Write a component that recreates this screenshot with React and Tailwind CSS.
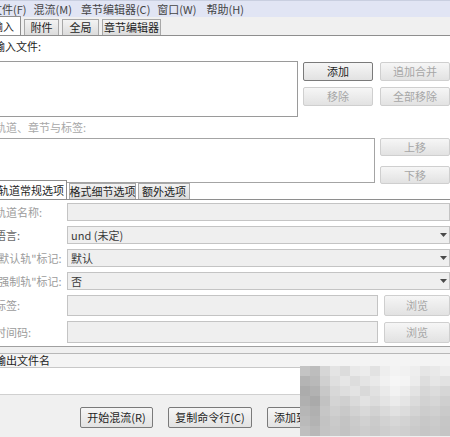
// MKVToolNix-style mux window (Chinese UI), clipped at 450x437

const font = { fontFamily: '"Noto Sans CJK SC", "Liberation Sans", sans-serif' };

// mosaic watermark colours, row by row (15 x 7 cells of 10px)
const MOSAIC = [
  ["#c4c4c4", "#bdbdbd", "#d6d6d6", "#e4e4e4", "#dcdcdc", "#e9e9e9", "#ececec", "#e2e2e2", "#eeeeee", "#f3f3f3", "#f1f1f1", "#eeeeee", "#e6e6e6", "#e9e9e9", "#eeeeee"],
  ["#b4b4b4", "#b9b9b9", "#d0d0d0", "#dfdfdf", "#e6e6e6", "#dddddd", "#e4e4e4", "#e9e9e9", "#f1f1f1", "#f6f6f6", "#f4f4f4", "#ececec", "#dedede", "#e6e6e6", "#e2e2e2"],
  ["#acacac", "#b2b2b2", "#c8c8c8", "#d8d8d8", "#dedede", "#e3e3e3", "#d9d9d9", "#e1e1e1", "#eaeaea", "#f2f2f2", "#ededed", "#e3e3e3", "#d7d7d7", "#dcdcdc", "#d6d6d6"],
  ["#b0b0b0", "#aaaaaa", "#c2c2c2", "#d4d4d4", "#d0d0d0", "#dadada", "#e2e2e2", "#dcdcdc", "#e4e4e4", "#ebebeb", "#e5e5e5", "#dbdbdb", "#d2d2d2", "#d6d6d6", "#cfcfcf"],
  ["#b6b6b6", "#b0b0b0", "#c6c6c6", "#cfcfcf", "#c9c9c9", "#d2d2d2", "#d9d9d9", "#d2d2d2", "#dadada", "#e1e1e1", "#dcdcdc", "#d4d4d4", "#cdcdcd", "#d0d0d0", "#cacaca"],
  ["#bababa", "#b3b3b3", "#c3c3c3", "#cacaca", "#c4c4c4", "#cbcbcb", "#d1d1d1", "#cbcbcb", "#d2d2d2", "#d7d7d7", "#d3d3d3", "#cdcdcd", "#c8c8c8", "#cbcbcb", "#c6c6c6"],
  ["#bfbfbf", "#b8b8b8", "#c4c4c4", "#c8c8c8", "#c3c3c3", "#c9c9c9", "#cdcdcd", "#c9c9c9", "#cecece", "#d2d2d2", "#cfcfcf", "#cacaca", "#c6c6c6", "#c9c9c9", "#c5c5c5"],
];

const Btn = ({ children, disabled, className = "" }) => (
  <div
    className={
      "flex items-center justify-center whitespace-nowrap rounded-[2px] border bg-gradient-to-b from-[#f6f6f6] to-[#e2e2e2] text-[11px] " +
      (disabled ? "border-[#cfcfcf] text-[#a6a6a6] " : "border-[#7a7a7a] text-[#1e1e1e] ") +
      className
    }
  >
    {children}
  </div>
);

const Tab = ({ children, active, className = "" }) => (
  <div
    className={
      "flex items-center whitespace-nowrap border border-b-0 text-[11px] " +
      (active
        ? "h-[19px] border-[#8e8e8e] bg-white text-[#1e1e1e] "
        : "mt-[2px] h-[16px] border-[#a8a8a8] bg-gradient-to-b from-[#f3f3f3] to-[#dcdcdc] text-[#1e1e1e] ") +
      className
    }
  >
    {children}
  </div>
);

const Combo = ({ value, disabled }) => (
  <div className="flex h-[18px] flex-1 items-center justify-between border border-[#c4c4c4] bg-[#efefef] pl-[3px] pr-[2px] text-[11px]">
    <span className={disabled ? "text-[#9a9a9a]" : "text-[#3a3a3a]"}>{value}</span>
    <svg width="7" height="4" viewBox="0 0 7 4">
      <path d="M0 0h7L3.5 4z" fill="#4a4a4a" />
    </svg>
  </div>
);

const FormRow = ({ label, children, className = "" }) => (
  <div className={"flex items-center " + className}>
    <div className="w-[67px] shrink-0 overflow-hidden whitespace-nowrap text-[11px] text-[#9c9c9c]">{label}</div>
    {children}
  </div>
);

export default function App() {
  return (
    <div className="relative h-[437px] w-[450px] overflow-hidden bg-white" style={font}>
      {/* menu bar */}
      <div className="flex h-[17px] items-center gap-[7px] whitespace-nowrap border-t border-[#c9cfe0] bg-[#e1e5f4] text-[11px] text-[#444]">
        <span className="-ml-[9px]">文件(F)</span>
        <span>混流(M)</span>
        <span className="ml-[2px]">章节编辑器(C)</span>
        <span>窗口(W)</span>
        <span className="ml-[3px]">帮助(H)</span>
      </div>

      {/* main tabs */}
      <div className="flex h-[19px] items-end gap-[3px] border-b border-[#8e8e8e] bg-[#f0f0f0]">
        <Tab active className="-ml-[12px] pl-[3px] pr-[6px]">输入</Tab>
        <Tab className="w-[35px] justify-center">附件</Tab>
        <Tab className="w-[37px] justify-center">全局</Tab>
        <Tab className="w-[59px] justify-center">章节编辑器</Tab>
      </div>

      <div className="h-[25px] whitespace-nowrap pt-[1px] text-[11px] leading-[18px] text-[#222]">
        <span className="-ml-[6px]">输入文件:</span>
      </div>

      {/* input files */}
      <div className="flex h-[56px]">
        <div className="w-[305px] border border-l-0 border-[#9a9a9a] bg-white" />
        <div className="ml-[5px] flex flex-1 flex-col gap-[6px] pt-[1px]">
          <div className="flex gap-[7px]">
            <Btn className="h-[19px] w-[70px]">添加</Btn>
            <Btn disabled className="h-[19px] w-[70px]">追加合并</Btn>
          </div>
          <div className="flex gap-[7px]">
            <Btn disabled className="h-[19px] w-[70px]">移除</Btn>
            <Btn disabled className="h-[19px] w-[70px]">全部移除</Btn>
          </div>
        </div>
      </div>

      <div className="flex h-[21px] items-center whitespace-nowrap text-[11px] text-[#a8a8a8]">
        <span className="-ml-[5px]">轨道、章节与标签:</span>
      </div>

      {/* tracks */}
      <div className="flex h-[45px]">
        <div className="w-[382px] border border-l-0 border-[#a4a4a4] bg-white" />
        <div className="ml-[5px] flex flex-1 flex-col gap-[10px]">
          <Btn disabled className="h-[18px] w-[70px]">上移</Btn>
          <Btn disabled className="h-[18px] w-[70px]">下移</Btn>
        </div>
      </div>

      {/* sub tabs */}
      <div className="flex h-[17px] items-end gap-[2px] border-b border-[#8e8e8e]">
        <Tab active className="-ml-[5px] h-[17px] w-[72px] justify-center">轨道常规选项</Tab>
        <Tab className="mt-0 h-[16px] w-[67px] justify-center">格式细节选项</Tab>
        <Tab className="mt-0 h-[16px] w-[52px] justify-center">额外选项</Tab>
      </div>

      {/* track options */}
      <div className="flex h-[147px] flex-col gap-[5px] border-b border-[#a0a0a0] bg-white pt-[3px]">
        <FormRow label={<span className="-ml-[5px]">轨道名称:</span>}>
          <div className="h-[18px] flex-1 border border-[#c4c4c4] bg-[#efefef]" />
        </FormRow>
        <FormRow label={<span className="-ml-[5px] text-[#6a6a6a]">语言:</span>}>
          <Combo value="und (未定)" />
        </FormRow>
        <FormRow label={<span className="-ml-[7px]">"默认轨"标记:</span>}>
          <Combo value="默认" />
        </FormRow>
        <FormRow label={<span className="-ml-[7px]">"强制轨"标记:</span>}>
          <Combo value="否" />
        </FormRow>
        <FormRow label={<span className="-ml-[5px]">标签:</span>}>
          <div className="h-[21px] w-[311px] border border-[#c4c4c4] bg-[#efefef]" />
          <Btn disabled className="ml-[6px] h-[21px] flex-1">浏览</Btn>
        </FormRow>
        <FormRow label={<span className="-ml-[5px]">时间码:</span>}>
          <div className="h-[22px] w-[311px] border border-[#c4c4c4] bg-[#efefef]" />
          <Btn disabled className="ml-[6px] h-[21px] flex-1">浏览</Btn>
        </FormRow>
      </div>

      {/* output */}
      <div className="h-[7px] border-b border-[#b8b8b8] bg-[#f0f0f0]" />
      <div className="flex h-[14px] items-center whitespace-nowrap border-b border-[#c8c8c8] bg-[#f4f4f4] text-[11px] text-[#222]">
        <span className="-ml-[5px]">输出文件名</span>
      </div>
      <div className="h-[27px] border-b border-[#d0d0d0] bg-white" />
      <div className="flex h-[42px] items-start gap-[15px] bg-[#f0f0f0] pl-[80px] pt-[12px]">
        <Btn className="h-[21px] w-[73px]">开始混流(R)</Btn>
        <Btn className="h-[21px] w-[84px]">复制命令行(C)</Btn>
        <Btn className="h-[21px] w-[80px] justify-start overflow-hidden pl-[6px]">添加到任务队列</Btn>
      </div>

      {/* mosaic watermark */}
      <div className="absolute left-[300px] top-[366px] grid grid-cols-[repeat(15,10px)] grid-rows-[repeat(7,10px)]">
        {MOSAIC.flat().map((c, i) => (
          <div key={i} style={{ backgroundColor: c }} />
        ))}
      </div>
    </div>
  );
}
